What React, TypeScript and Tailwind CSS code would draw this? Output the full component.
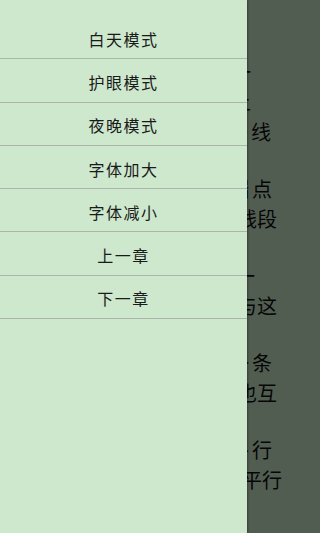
const MENU_ITEMS = ["白天模式", "护眼模式", "夜晚模式", "字体加大", "字体减小", "上一章", "下一章"];

// page text behind the drawer; each line carries its right padding and spacing
// so the visible tail lands where it does in the reader
const PARAGRAPHS: { text: string; cls: string }[][] = [
    [
        { text: "在同一平面内，两条直线只有两种位置关系：相交或平行。过一", cls: "pr-[49px]" },
        { text: "点有且只有一条直线与已知直线垂直，连接直线外一点与直线上", cls: "pr-[49px]" },
        { text: "所有线段中，垂线段最短。我们把这条线段叫做垂线", cls: "pr-[26px] tracking-[3px]" },
    ],
    [
        { text: "直线上两点和它们之间的部分叫做线段，线段有两个端点", cls: "pr-[25px] tracking-[3px]" },
        { text: "把线段向一方无限延伸所形成的图形叫做射线段", cls: "pr-[23px]" },
    ],
    [
        { text: "经过两点有且只有一条直线，两点确定一", cls: "pr-[45px]" },
        { text: "如果两条直线都与第三条直线平行，那么这两条直线也与这", cls: "pr-[23px]" },
    ],
    [
        { text: "在同一平面内，不相交的两条直线叫做平行线，过直线外一点有且只有一条", cls: "pr-[25px] tracking-[3px]" },
        { text: "与已知直线平行的直线，两条直线也互", cls: "pr-[23px]" },
    ],
    [
        { text: "同位角相等，两直线平行；内错角相等，两直线平行", cls: "pr-[25px] tracking-[3px]" },
        { text: "同旁内角互补，两直线平行", cls: "pr-[18px]" },
    ],
];

export default function App() {
    return (
        <div
            className="relative h-[533px] w-full overflow-hidden bg-[#cce8cc]"
            style={{ fontFamily: '"Noto Sans CJK SC", "Noto Sans", sans-serif' }}
        >
            {/* reader page */}
            <div className="flex w-[300px] flex-col gap-[27px] pt-[57px] text-[20px] leading-[30px] text-[#111]">
                {PARAGRAPHS.map((lines, i) => (
                    <div key={i} className="flex flex-col">
                        {lines.map((line, j) => (
                            <div key={j} className={`flex justify-end overflow-hidden whitespace-nowrap ${line.cls}`}>
                                <span className="shrink-0">{line.text}</span>
                            </div>
                        ))}
                    </div>
                ))}
            </div>

            {/* scrim */}
            <div className="absolute inset-0 bg-black/60" />

            {/* drawer */}
            <nav className="absolute left-0 top-0 flex h-full w-[247px] flex-col bg-[#cde8cd] pt-[16px] shadow-[1px_0_2px_rgba(0,0,0,0.35)]">
                {MENU_ITEMS.map((label) => (
                    <div
                        key={label}
                        className="flex h-[43.3px] items-center justify-center border-b border-[#a9b6a9] pt-[3px] text-[16px] tracking-[1.5px] text-[#1a1a1a]"
                    >
                        {label}
                    </div>
                ))}
            </nav>
        </div>
    );
}
